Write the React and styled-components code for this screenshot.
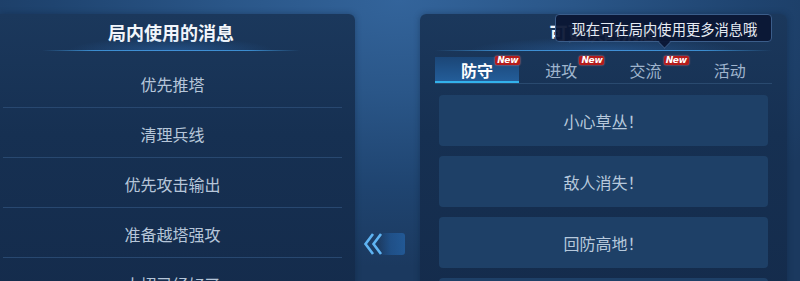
import React from "react";
import styled, { createGlobalStyle } from "styled-components";

const Global = createGlobalStyle`
  html, body { margin: 0; padding: 0; }
  body {
    width: 800px; height: 281px; overflow: hidden;
    font-family: "Noto Sans CJK SC", "Noto Sans", sans-serif;
    background: #1d3c64;
  }
`;

const Screen = styled.div`
  width: 800px;
  height: 281px;
  overflow: hidden;
  display: flex;
  align-items: flex-start;
  padding-top: 14px;
  box-sizing: border-box;
  background:
    radial-gradient(ellipse 62% 95% at 50% 0%, #33649b 0%, #2a5688 35%, #1f4470 70%, #1b395f 100%);
`;

const Panel = styled.div`
  position: relative;
  flex: none;
  width: ${(p) => p.$w}px;
  height: 300px;
  box-sizing: border-box;
  border-radius: ${(p) => (p.$left ? "0 6px 0 0" : "6px 6px 0 0")};
  background: linear-gradient(180deg, #1b385c 0%, #163052 40%, #142b4b 100%);
  box-shadow: 0 0 6px rgba(10, 25, 50, 0.35);
`;

const LeftInner = styled.div`
  width: 342px;
  display: flex;
  flex-direction: column;
`;

const RightInner = styled.div`
  display: flex;
  flex-direction: column;
  padding: 0 15px;
`;

const Title = styled.div`
  height: 36px;
  display: flex;
  align-items: center;
  justify-content: center;
  font-size: 18px;
  font-weight: 700;
  color: #f2f6fb;
`;

const Glow = styled.div`
  position: relative;
  height: 1px;
  margin: 0 ${(p) => p.$m}px;
  background: linear-gradient(90deg, rgba(58,143,208,0) 0%, #3c8fd0 20%, #4a9fe0 50%, #3c8fd0 80%, rgba(58,143,208,0) 100%);
  &::before {
    content: "";
    position: absolute;
    left: 10%;
    right: 10%;
    bottom: 0;
    height: 14px;
    background: radial-gradient(ellipse 50% 100% at 50% 100%, rgba(50,120,200,0.4), rgba(50,120,200,0));
  }
`;

const List = styled.div`
  margin-top: 7px;
  display: flex;
  flex-direction: column;
`;

const Row = styled.div`
  height: 50px;
  box-sizing: border-box;
  margin-left: 3px;
  padding-top: 2px;
  border-bottom: 1px solid #284870;
  display: flex;
  align-items: center;
  justify-content: center;
  font-size: 16px;
  color: #b6c6d9;
`;

const Middle = styled.div`
  flex: none;
  width: 65px;
  padding-top: 219px;
  padding-left: 8px;
  box-sizing: border-box;
`;

const Collapse = styled.div`
  position: relative;
  width: 42px;
  height: 22px;
  &::before {
    content: "";
    position: absolute;
    right: 0;
    top: 0;
    width: 26px;
    height: 22px;
    border-radius: 3px;
    background: linear-gradient(90deg, rgba(34, 96, 165, 0) 0%, rgba(34, 96, 165, 0.55) 45%, rgba(36, 98, 165, 0.75) 100%);
  }
  svg { position: relative; display: block; }
`;

const Tabs = styled.div`
  margin-top: 6px;
  display: grid;
  grid-template-columns: repeat(4, 1fr);
  height: 26px;
  border-bottom: 1px solid #2a4a6f;
`;

const Tab = styled.div`
  display: flex;
  align-items: center;
  justify-content: center;
  font-size: 16px;
  color: ${(p) => (p.$active ? "#ffffff" : "#9fb4cd")};
  font-weight: ${(p) => (p.$active ? 700 : 400)};
  background: ${(p) =>
    p.$active ? "linear-gradient(180deg, #1b4677 0%, #245f9c 100%)" : "transparent"};
  box-shadow: ${(p) => (p.$active ? "inset 0 -2px 0 #33b2ec" : "none")};
`;

const Label = styled.span`
  position: relative;
  line-height: 16px;
`;

const NewBadge = styled.span`
  position: absolute;
  left: calc(100% + 2px);
  top: -6px;
  height: 9px;
  padding: 0 2px;
  border-radius: 2px;
  background: #b51c1c;
  box-shadow: 0 0 2px rgba(255, 140, 140, 0.9);
  color: #fff;
  font-family: "DejaVu Sans", sans-serif;
  font-size: 9px;
  line-height: 9px;
  font-weight: 700;
  font-style: italic;
  letter-spacing: -0.3px;
  white-space: nowrap;
`;

const Buttons = styled.div`
  margin: 11px 4px 0;
  display: flex;
  flex-direction: column;
  gap: 10px;
`;

const MsgButton = styled.div`
  height: 51px;
  flex: none;
  border-radius: 4px;
  background: #1e4067;
  display: flex;
  align-items: center;
  justify-content: center;
  font-size: 16px;
  color: #b7c9dc;
`;

const Tooltip = styled.div`
  position: absolute;
  left: 135px;
  top: 0;
  width: 217px;
  height: 28px;
  box-sizing: border-box;
  padding-left: 2px;
  border: 1px solid #3b5d8a;
  border-radius: 4px;
  background: rgba(11, 22, 52, 0.94);
  color: #e6ebf3;
  font-size: 14.3px;
  display: flex;
  align-items: center;
  justify-content: center;
  &::after {
    content: "";
    position: absolute;
    left: 104px;
    bottom: -6px;
    width: 8px;
    height: 8px;
    background: rgba(11, 22, 52, 0.94);
    border-right: 1px solid #3b5d8a;
    border-bottom: 1px solid #3b5d8a;
    transform: rotate(45deg);
  }
`;

const leftItems = ["优先推塔", "清理兵线", "优先攻击输出", "准备越塔强攻", "大招已经好了"];
const tabs = [
  { name: "防守", isNew: true, active: true },
  { name: "进攻", isNew: true },
  { name: "交流", isNew: true },
  { name: "活动" },
];
const msgs = ["小心草丛！", "敌人消失！", "回防高地！", "集合准备团战！"];

export default function App() {
  return (
    <>
      <Global />
      <Screen>
        <Panel $w={355} $left>
          <LeftInner>
            <Title>局内使用的消息</Title>
            <Glow $m={42} />
            <List>
              {leftItems.map((t) => (
                <Row key={t}>{t}</Row>
              ))}
            </List>
          </LeftInner>
        </Panel>
        <Middle>
          <Collapse>
            <svg width="24" height="22" viewBox="0 0 24 22">
              <path d="M10 1 L2.5 11 L10 21" fill="none" stroke="#5fb4f2" strokeWidth="2.6" strokeLinejoin="miter" />
              <path d="M18 1 L10.5 11 L18 21" fill="none" stroke="#5fb4f2" strokeWidth="2.6" strokeLinejoin="miter" />
            </svg>
          </Collapse>
        </Middle>
        <Panel $w={367}>
          <RightInner>
            <Title>可更换的消息</Title>
            <Glow $m={0} />
            <Tabs>
              {tabs.map((t) => (
                <Tab key={t.name} $active={t.active}>
                  <Label>
                    {t.name}
                    {t.isNew && <NewBadge>New</NewBadge>}
                  </Label>
                </Tab>
              ))}
            </Tabs>
            <Buttons>
              {msgs.map((m) => (
                <MsgButton key={m}>{m}</MsgButton>
              ))}
            </Buttons>
          </RightInner>
          <Tooltip>现在可在局内使用更多消息哦</Tooltip>
        </Panel>
      </Screen>
    </>
  );
}
